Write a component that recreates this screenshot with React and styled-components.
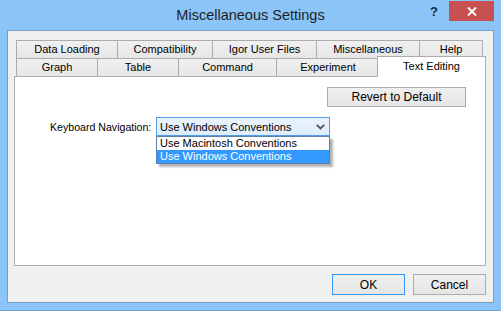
import React from "react";
import styled, { createGlobalStyle } from "styled-components";

const GlobalStyle = createGlobalStyle`
  html, body { margin: 0; padding: 0; background: #ffffff; }
  body { font-family: "Liberation Sans", Arial, sans-serif; }
  * { box-sizing: border-box; }
`;

const Window = styled.div`
  width: 501px;
  height: 311px;
  background: #8bc4f6;
  border-bottom: 1px solid #6f9fcc;
  padding: 0 7px 7px 7px;
  display: flex;
  flex-direction: column;
`;

const TitleBar = styled.div`
  height: 30px;
  display: grid;
  grid-template-columns: 1fr auto 1fr;
  align-items: start;
`;

const Title = styled.div`
  grid-column: 2;
  font-size: 14.5px;
  color: #1f1f1f;
  line-height: 30px;
  white-space: nowrap;
`;

const Controls = styled.div`
  grid-column: 3;
  display: flex;
  justify-content: flex-end;
  align-items: flex-start;
`;

const HelpGlyph = styled.div`
  font-weight: bold;
  font-size: 13px;
  color: #1e2a36;
  margin-top: 5px;
  margin-right: 11px;
  line-height: 14px;
`;

const CloseButton = styled.div`
  width: 45px;
  height: 20px;
  margin-top: 1px;
  background: #c75050;
  display: flex;
  align-items: center;
  justify-content: center;
`;

const Client = styled.div`
  flex: 1;
  border: 1px solid #789fc6;
  background: #f0f0f0;
  padding: 9px 7px 7px 6px;
  display: flex;
  flex-direction: column;
`;

const TabRow = styled.div`
  display: flex;
  height: 18px;
  padding-left: 2px;
  align-items: flex-start;
`;

const Tab = styled.div`
  width: ${(p) => p.$w}px;
  height: 18px;
  border: 1px solid #acacac;
  border-bottom: none;
  background: linear-gradient(#f0f0f0, #e6e6e6);
  font-size: 11px;
  color: #000;
  line-height: 16px;
  text-align: center;
  white-space: nowrap;
  flex: none;
  & + & { margin-left: -1px; }
`;

const ActiveTab = styled(Tab)`
  position: relative;
  z-index: 2;
  background: #ffffff;
  height: 21px;
  margin-top: -2px;
  margin-left: -3px !important;
  line-height: 19px;
`;

const Panel = styled.div`
  height: 190px;
  background: #ffffff;
  border: 1px solid #adadad;
  padding: 10px 19px 0 35px;
  display: flex;
  flex-direction: column;
`;

const TopRow = styled.div`
  display: flex;
  justify-content: flex-end;
`;

const Button = styled.div`
  width: ${(p) => p.$w}px;
  height: ${(p) => p.$h}px;
  border: 1px solid ${(p) => (p.$default ? "#3399ff" : "#acacac")};
  background: linear-gradient(#f0f0f0, #e5e5e5);
  font-size: 12px;
  color: #000;
  display: flex;
  align-items: center;
  justify-content: center;
  white-space: nowrap;
`;

const FieldRow = styled.div`
  margin-top: 10px;
  display: grid;
  grid-template-columns: 106px 174px;
  align-items: center;
`;

const Label = styled.div`
  font-size: 10.6px;
  color: #000;
  white-space: nowrap;
`;

const ComboWrap = styled.div`
  position: relative;
`;

const Combo = styled.div`
  height: 19px;
  border: 1px solid #569de5;
  background: linear-gradient(#ecf4fc, #dcecfc);
  display: flex;
  align-items: center;
  justify-content: space-between;
  padding: 0 4px 0 3px;
  font-size: 11px;
  color: #000;
`;

const DropList = styled.div`
  position: absolute;
  left: 0;
  top: 100%;
  width: 174px;
  border: 1px solid #5b7fa6;
  background: #ffffff;
  box-shadow: 3px 3px 2px rgba(0, 0, 0, 0.3);
  z-index: 5;
`;

const Option = styled.div`
  height: 13px;
  line-height: 13px;
  padding-left: 3px;
  font-size: 11px;
  white-space: nowrap;
  background: ${(p) => (p.$selected ? "#3399ff" : "#ffffff")};
  color: ${(p) => (p.$selected ? "#ffffff" : "#000000")};
`;

const Footer = styled.div`
  margin-top: 8px;
  display: flex;
  justify-content: flex-end;
  gap: 8px;
`;

const row1 = [
  ["Data Loading", 102],
  ["Compatibility", 96],
  ["Igor User Files", 105],
  ["Miscellaneous", 104],
  ["Help", 64],
];

const row2 = [
  ["Graph", 82],
  ["Table", 82],
  ["Command", 99],
  ["Experiment", 104],
];

export default function App() {
  return (
    <>
      <GlobalStyle />
      <Window>
        <TitleBar>
          <Title>Miscellaneous Settings</Title>
          <Controls>
            <HelpGlyph>?</HelpGlyph>
            <CloseButton>
              <svg width="10" height="9" viewBox="0 0 10 9">
                <path d="M1 0.5 L9 8.5 M9 0.5 L1 8.5" stroke="#ffffff" strokeWidth="2" />
              </svg>
            </CloseButton>
          </Controls>
        </TitleBar>
        <Client>
          <TabRow>
            {row1.map(([t, w]) => (
              <Tab key={t} $w={w}>{t}</Tab>
            ))}
          </TabRow>
          <TabRow>
            {row2.map(([t, w]) => (
              <Tab key={t} $w={w}>{t}</Tab>
            ))}
            <ActiveTab $w={109}>Text Editing</ActiveTab>
          </TabRow>
          <Panel>
            <TopRow>
              <Button $w={139} $h={20}>Revert to Default</Button>
            </TopRow>
            <FieldRow>
              <Label>Keyboard Navigation:</Label>
              <ComboWrap>
                <Combo>
                  <span>Use Windows Conventions</span>
                  <svg width="9" height="6" viewBox="0 0 9 6">
                    <path d="M0.8 0.8 L4.5 4.5 L8.2 0.8" stroke="#555" strokeWidth="1.8" fill="none" />
                  </svg>
                </Combo>
                <DropList>
                  <Option>Use Macintosh Conventions</Option>
                  <Option $selected>Use Windows Conventions</Option>
                </DropList>
              </ComboWrap>
            </FieldRow>
          </Panel>
          <Footer>
            <Button $w={73} $h={21} $default>OK</Button>
            <Button $w={73} $h={21}>Cancel</Button>
          </Footer>
        </Client>
      </Window>
    </>
  );
}
